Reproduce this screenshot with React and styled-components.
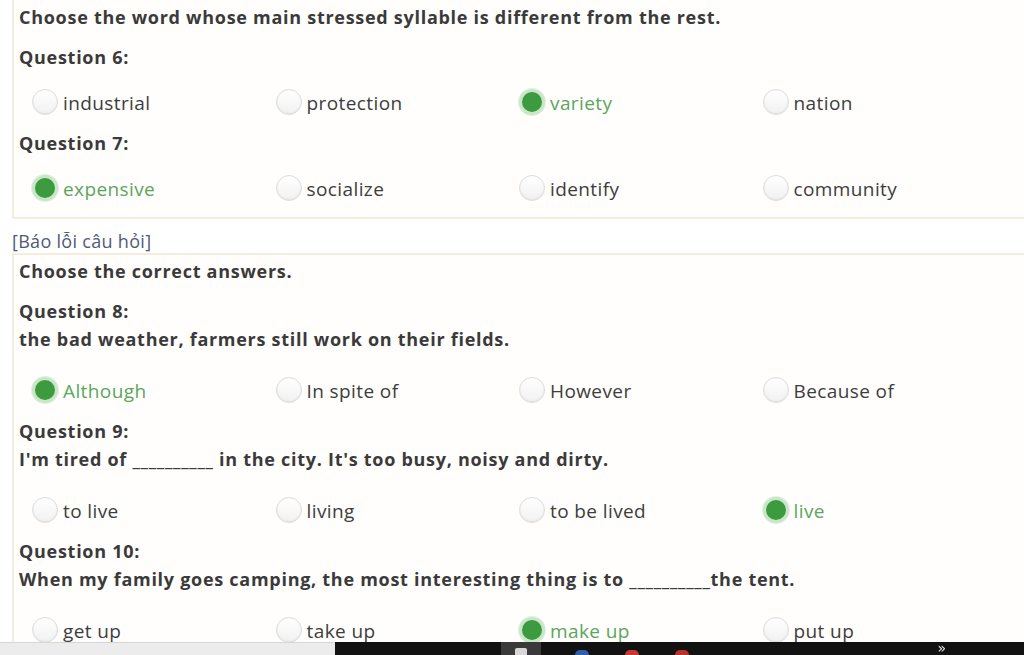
import React from 'react'
import styled, { createGlobalStyle } from 'styled-components'

const GlobalStyle = createGlobalStyle`
  html, body {
    margin: 0;
    padding: 0;
    background: #ffffff;
    overflow: hidden;
  }
  body {
    font-family: "Open Sans", Lato, sans-serif;
    color: #3b3b3b;
  }
`

const quiz1 = [
  { label: 'Question 6:', options: ['industrial', 'protection', 'variety', 'nation'], picked: 2 },
  { label: 'Question 7:', options: ['expensive', 'socialize', 'identify', 'community'], picked: 0 },
]

const quiz2 = [
  {
    label: 'Question 8:',
    text: 'the bad weather, farmers still work on their fields.',
    options: ['Although', 'In spite of', 'However', 'Because of'],
    picked: 0,
  },
  {
    label: 'Question 9:',
    text: "I'm tired of __________ in the city. It's too busy, noisy and dirty.",
    options: ['to live', 'living', 'to be lived', 'live'],
    picked: 3,
  },
  {
    label: 'Question 10:',
    text: 'When my family goes camping, the most interesting thing is to __________the tent.',
    options: ['get up', 'take up', 'make up', 'put up'],
    picked: 2,
  },
]

export default function App() {
  return (
    <Page>
      <GlobalStyle />
      <Card $first>
        <Instruction>Choose the word whose main stressed syllable is different from the rest.</Instruction>
        {quiz1.map((q) => (
          <Question key={q.label}>
            <QLabel>{q.label}</QLabel>
            <Options>
              {q.options.map((o, i) => (
                <Option key={o} $on={i === q.picked}>
                  <Radio $on={i === q.picked} />
                  <OptText>{o}</OptText>
                </Option>
              ))}
            </Options>
          </Question>
        ))}
      </Card>

      <ReportLink>[Báo lỗi câu hỏi]</ReportLink>

      <Card>
        <Instruction>Choose the correct answers.</Instruction>
        {quiz2.map((q) => (
          <Question key={q.label}>
            <QLabel>{q.label}</QLabel>
            <QText>{q.text}</QText>
            <Options $spaced>
              {q.options.map((o, i) => (
                <Option key={o} $on={i === q.picked}>
                  <Radio $on={i === q.picked} />
                  <OptText>{o}</OptText>
                </Option>
              ))}
            </Options>
          </Question>
        ))}
      </Card>

      <Taskbar>
        <TaskLeft />
        <TaskDark>
          <TaskActive><TaskGlyph /></TaskActive>
          <TaskDot $c="#2f5fa8" style={{ marginLeft: 34 }} />
          <TaskDot $c="#c9382f" style={{ marginLeft: 36 }} />
          <TaskDot $c="#b8332b" style={{ marginLeft: 36 }} />
          <Chevron>»</Chevron>
        </TaskDark>
      </Taskbar>
    </Page>
  )
}

const Page = styled.div`
  display: flex;
  flex-direction: column;
  width: 1024px;
  height: 655px;
  overflow: hidden;
`

const Card = styled.div`
  margin-left: 12px;
  width: 1040px;
  border: 2px solid #f5ecdb;
  border-right: none;
  border-top: ${(p) => (p.$first ? 'none' : '2px solid #f5ecdb')};
  background: #fffefc;
  padding: ${(p) => (p.$first ? '5px 0 14px 5px' : '4px 0 40px 5px')};
  display: flex;
  flex-direction: column;
  flex-shrink: 0;
`

const boldText = `
  font-size: 18px;
  font-weight: 700;
  line-height: 24px;
  letter-spacing: 0.72px;
  color: #3a3a3a;
`

const Instruction = styled.div`
  ${boldText}
`

const Question = styled.div`
  display: flex;
  flex-direction: column;
  margin-top: 16px;
  & + & {
    margin-top: 14px;
  }
`

const QLabel = styled.div`
  ${boldText}
`

const QText = styled.div`
  ${boldText}
  margin-top: 4px;
`

const Options = styled.div`
  display: grid;
  grid-template-columns: repeat(4, 243.5px);
  margin-top: ${(p) => (p.$spaced ? '24px' : '18px')};
  padding-left: 13px;
`

const Option = styled.label`
  display: flex;
  align-items: center;
  gap: 5px;
  height: 30px;
  font-size: 19px;
  letter-spacing: 0.4px;
  color: ${(p) => (p.$on ? '#5aa65c' : '#3d3d3d')};
`

const OptText = styled.span`
  line-height: 26px;
  padding-top: 1px;
`

const Radio = styled.span`
  box-sizing: border-box;
  width: 26px;
  height: 26px;
  border-radius: 50%;
  flex-shrink: 0;
  ${(p) =>
    p.$on
      ? `
    background: #3c9a3f;
    border: 3px solid #c9e6c8;
    box-shadow: 0 0 0 1px #e3f1e2;
  `
      : `
    background: linear-gradient(180deg, #ffffff 0%, #f1f1f1 100%);
    border: 1px solid #dcdcdc;
    box-shadow: inset 0 -1px 2px rgba(0, 0, 0, 0.06);
  `}
`

const ReportLink = styled.div`
  margin: 10px 0 0 12px;
  font-size: 18px;
  line-height: 24px;
  letter-spacing: 0.3px;
  color: #4c5b78;
`

const Taskbar = styled.div`
  position: fixed;
  left: 0;
  right: 0;
  bottom: 0;
  height: 13px;
  display: flex;
`

const TaskLeft = styled.div`
  width: 335px;
  background: #ececec;
  border-top: 1px solid #d6d6d6;
`

const TaskDark = styled.div`
  flex: 1;
  background: #121212;
  display: flex;
  align-items: flex-start;
  padding-left: 166px;
`

const TaskActive = styled.div`
  width: 40px;
  height: 13px;
  background: #3a3a3a;
  display: flex;
  justify-content: center;
  padding-top: 6px;
  box-sizing: border-box;
`

const TaskGlyph = styled.div`
  width: 12px;
  height: 7px;
  background: #d8d8d8;
  border-radius: 2px 2px 0 0;
`

const TaskDot = styled.div`
  width: 14px;
  height: 5px;
  margin-top: 8px;
  background: ${(p) => p.$c};
  border-radius: 7px 7px 0 0;
`

const Chevron = styled.div`
  margin-left: auto;
  margin-right: 78px;
  color: #e8e8e8;
  font-size: 14px;
  line-height: 13px;
  font-family: "DejaVu Sans", sans-serif;
`
